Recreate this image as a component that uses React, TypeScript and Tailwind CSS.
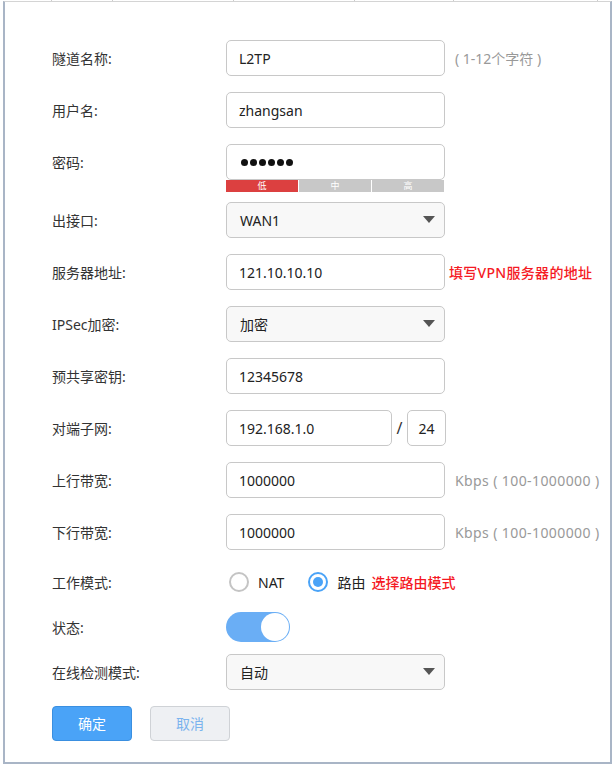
import React from "react";

const font = { fontFamily: '"Noto Sans", "Noto Sans CJK SC", sans-serif' };

function Label({ children }: { children: React.ReactNode }) {
  return <div className="w-[174px] shrink-0 text-[14px] text-[#333]">{children}</div>;
}

function Input({ value, w = "w-[219px]", cls = "" }: { value: React.ReactNode; w?: string; cls?: string }) {
  return (
    <div className={`${w} h-9 rounded-[5px] border border-[#c8c8c8] bg-white flex items-center px-[12px] text-[14px] text-[#222] ${cls}`}>
      {value}
    </div>
  );
}

function Select({ value }: { value: string }) {
  return (
    <div className="w-[219px] h-9 rounded-[5px] border border-[#c8c8c8] bg-[#f8f8f8] flex items-center justify-between pl-[13px] pr-[9px] text-[14px] text-[#222]">
      <span>{value}</span>
      <svg width="12" height="8" viewBox="0 0 12 8"><path d="M0 0 H12 L6 7 Z" fill="#555" /></svg>
    </div>
  );
}

function Row({ label, children, cls = "" }: { label: string; children: React.ReactNode; cls?: string }) {
  return (
    <div className={`flex items-center ${cls}`}>
      <Label>{label}</Label>
      <div className="flex items-center">{children}</div>
    </div>
  );
}

function Radio({ checked }: { checked: boolean }) {
  return checked ? (
    <div className="w-[20px] h-[20px] rounded-full border-2 border-[#4aa3f7] flex items-center justify-center bg-white">
      <div className="w-[10px] h-[10px] rounded-full bg-[#4aa3f7]" />
    </div>
  ) : (
    <div className="w-[20px] h-[20px] rounded-full border-2 border-[#c4c4c4] bg-white" />
  );
}

export default function App() {
  const dots = [0, 1, 2, 3, 4, 5];
  return (
    <div className="w-[615px] h-[767px] bg-white" style={font}>
      <div className="flex h-[1px] ml-[3px] w-[608px]">
        <div className="w-[49px] border-r border-[#ccc]" />
        <div className="w-[61px] border-r border-[#ccc]" />
        <div className="w-[121px] border-r border-[#ccc]" />
        <div className="w-[121px] border-r border-[#ccc]" />
        <div className="w-[99px] border-r border-[#ccc]" />
        <div className="w-[144px] border-r border-[#ccc]" />
      </div>
      <div className="ml-[3px] w-[609px] h-[763px] border-t border-t-[#d4d4d4] border-l-2 border-r-2 border-b-2 border-l-[#a9b5c6] border-r-[#a9b5c6] border-b-[#a9b5c6] pl-[47px] pt-[38px]">
        <Row label="隧道名称:">
          <Input value="L2TP" />
          <span className="ml-[10px] text-[14px] text-[#999]">( 1-12个字符 )</span>
        </Row>
        <Row label="用户名:" cls="mt-4">
          <Input value="zhangsan" />
        </Row>
        <div className="flex mt-4">
          <div className="h-9 flex items-center"><Label>密码:</Label></div>
          <div className="flex flex-col">
            <Input
              value={
                <div className="flex gap-[2px] ml-[2px]">
                  {dots.map((d) => (
                    <div key={d} className="w-[7px] h-[7px] rounded-full bg-[#111]" />
                  ))}
                </div>
              }
            />
            <div className="flex w-[218px] h-[12px] text-[9px] leading-[12px] text-white text-center">
              <div className="w-[72px] bg-[#dc4040]">低</div>
              <div className="w-[1px] bg-white" />
              <div className="w-[72px] bg-[#c8c8c8]">中</div>
              <div className="w-[1px] bg-white" />
              <div className="w-[72px] bg-[#c8c8c8]">高</div>
            </div>
          </div>
        </div>
        <Row label="出接口:" cls="mt-[10px]">
          <Select value="WAN1" />
        </Row>
        <Row label="服务器地址:" cls="mt-4">
          <Input value="121.10.10.10" />
          <span className="ml-[4px] text-[14px] font-medium tracking-[0.3px] text-[#f51a24]">填写VPN服务器的地址</span>
        </Row>
        <Row label="IPSec加密:" cls="mt-4">
          <Select value="加密" />
        </Row>
        <Row label="预共享密钥:" cls="mt-4">
          <Input value="12345678" />
        </Row>
        <Row label="对端子网:" cls="mt-4">
          <Input value="192.168.1.0" w="w-[166px]" />
          <span className="w-[15px] text-center text-[16px] text-[#333]">/</span>
          <Input value="24" w="w-[39px]" cls="justify-center !px-0" />
        </Row>
        <Row label="上行带宽:" cls="mt-4">
          <Input value="1000000" />
          <span className="ml-[10px] text-[14px] tracking-[0.4px] text-[#999]">Kbps ( 100-1000000 )</span>
        </Row>
        <Row label="下行带宽:" cls="mt-4">
          <Input value="1000000" />
          <span className="ml-[10px] text-[14px] tracking-[0.4px] text-[#999]">Kbps ( 100-1000000 )</span>
        </Row>
        <div className="flex items-center mt-4 h-8">
          <Label>工作模式:</Label>
          <div className="flex items-center text-[14px] text-[#222]">
            <div className="ml-[3px]"><Radio checked={false} /></div>
            <span className="ml-[9px]">NAT</span>
            <div className="ml-[24px]"><Radio checked={true} /></div>
            <span className="ml-[9px]">路由</span>
            <span className="ml-[6px] font-medium text-[#f51a24]">选择路由模式</span>
          </div>
        </div>
        <div className="flex items-center mt-[14px] h-[30px]">
          <Label>状态:</Label>
          <div className="w-[64px] h-[30px] rounded-full bg-[#6aaef5] flex items-center justify-end pr-[1px]">
            <div className="w-[28px] h-[28px] rounded-full bg-white" />
          </div>
        </div>
        <Row label="在线检测模式:" cls="mt-3">
          <Select value="自动" />
        </Row>
        <div className="flex mt-4 gap-[18px]">
          <button className="w-[80px] h-[35px] rounded-[4px] bg-[#4aa3f7] border border-[#3a8fe0] text-white text-[14px]">确定</button>
          <button className="w-[80px] h-[35px] rounded-[4px] bg-[#eef0f3] border border-[#cfd2d6] text-[#7ab3ee] text-[14px]">取消</button>
        </div>
      </div>
    </div>
  );
}
